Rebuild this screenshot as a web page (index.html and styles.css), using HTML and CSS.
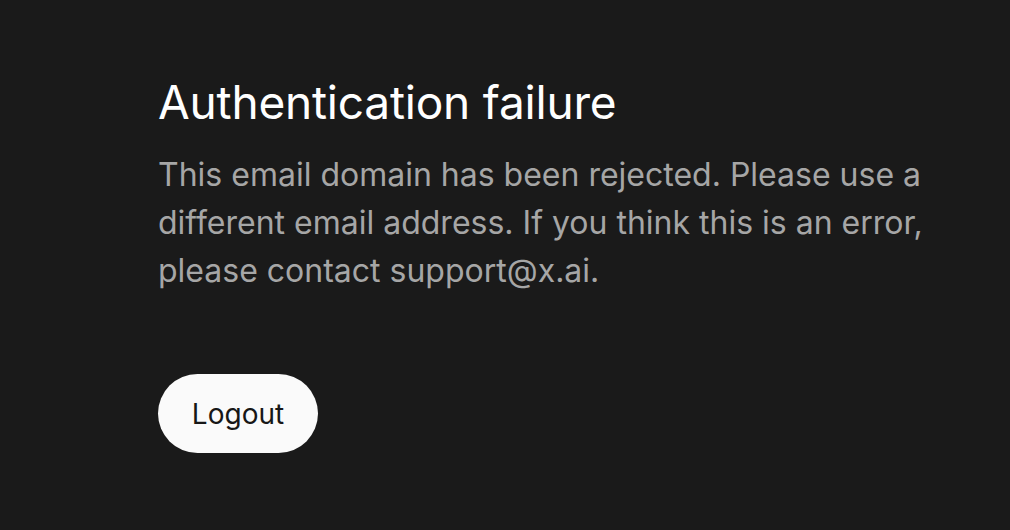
FILE: index.html
```html
<!DOCTYPE html>
<html>
<head>
<meta charset="utf-8">
<link rel="stylesheet" href="styles.css">
</head>
<body>
<main class="page">
  <section class="card">
    <h1 class="title">Authentication failure</h1>
    <p class="message">This email domain has been rejected. Please use a different email address. If you think this is an error, please contact support@x.ai.</p>
    <button class="logout">Logout</button>
  </section>
</main>
</body>
</html>
```
FILE: styles.css
```css
html, body {
  margin: 0;
  padding: 0;
  background: #1a1a1a;
  height: 100%;
}
body {
  font-family: Inter, "Noto Sans", sans-serif;
}
.page {
  padding: 72px 0 0 158px;
}
.card {
  width: 790px;
  display: flex;
  flex-direction: column;
  align-items: flex-start;
}
.title {
  margin: 0;
  font-size: 46px;
  font-weight: 400;
  line-height: 60px;
  color: #ffffff;
  letter-spacing: -0.2px;
}
.message {
  margin: 19px 0 0 0;
  font-size: 32px;
  line-height: 48px;
  color: #a6a6a6;
}
.logout {
  margin-top: 79px;
  width: 160px;
  height: 79px;
  border: none;
  border-radius: 40px;
  background: #fafafa;
  color: #171717;
  font-family: Inter, sans-serif;
  font-size: 28px;
  cursor: pointer;
}
```
